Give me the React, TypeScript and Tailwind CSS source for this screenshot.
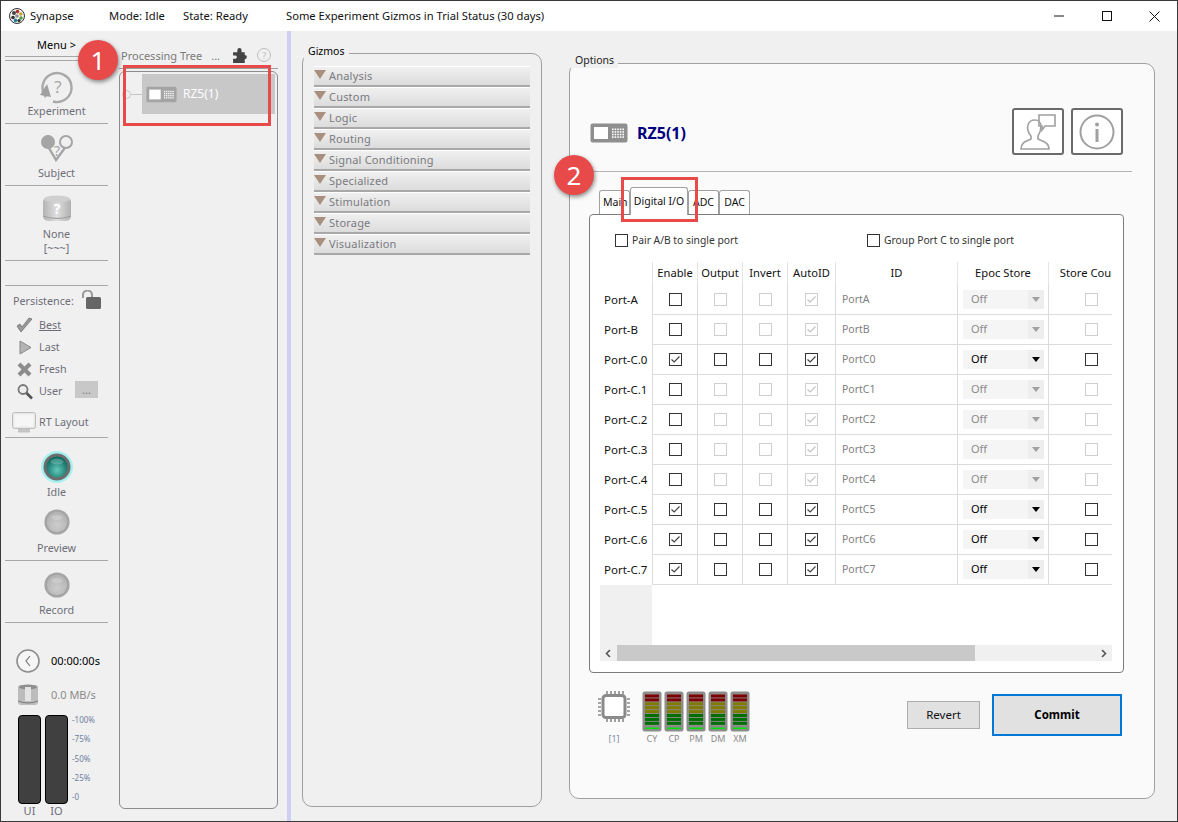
import React from "react";

const gizmos = ["Analysis", "Custom", "Logic", "Routing", "Signal Conditioning", "Specialized", "Stimulation", "Storage", "Visualization"];

const ports = [
  { name: "Port-A", id: "PortA", on: false, active: false },
  { name: "Port-B", id: "PortB", on: false, active: false },
  { name: "Port-C.0", id: "PortC0", on: true, active: true },
  { name: "Port-C.1", id: "PortC1", on: false, active: false },
  { name: "Port-C.2", id: "PortC2", on: false, active: false },
  { name: "Port-C.3", id: "PortC3", on: false, active: false },
  { name: "Port-C.4", id: "PortC4", on: false, active: false },
  { name: "Port-C.5", id: "PortC5", on: true, active: true },
  { name: "Port-C.6", id: "PortC6", on: true, active: true },
  { name: "Port-C.7", id: "PortC7", on: true, active: true },
];

const meters = ["CY", "CP", "PM", "DM", "XM"];

function Check({ checked = false, disabled = false }: { checked?: boolean; disabled?: boolean }) {
  return (
    <span className={`flex h-[13px] w-[13px] items-center justify-center border bg-white ${disabled ? "border-[#cfcfcf]" : "border-[#333333]"}`}>
      {checked && (
        <svg width="11" height="11" viewBox="0 0 11 11" fill="none">
          <path d="M1.5 5.5 L4.2 8 L9.5 2.5" stroke={disabled ? "#c4c4c4" : "#444444"} strokeWidth="1.2" />
        </svg>
      )}
    </span>
  );
}

function DeviceIcon({ w, h, fill = "#8f8f8f" }: { w: number; h: number; fill?: string }) {
  const dots = [];
  for (let r = 0; r < 4; r++) {
    for (let c = 0; c < 5; c++) {
      dots.push(<rect key={`${r}-${c}`} x={22 + c * 2.6} y={5.5 + r * 2.6} width="1.6" height="1.6" fill="#fff" />);
    }
  }
  return (
    <svg width={w} height={h} viewBox="0 0 38 20">
      <rect x="0.5" y="0.5" width="37" height="19" rx="2" fill={fill} />
      <rect x="4" y="4" width="14" height="12" fill="#fff" />
      {dots}
    </svg>
  );
}

function Orb({ size, glow = false }: { size: number; glow?: boolean }) {
  const id = glow ? "orbIdle" : `orbOff${size}`;
  return (
    <svg width={size} height={size} viewBox="0 0 32 32">
      <defs>
        <radialGradient id={id} cx="50%" cy="65%" r="60%">
          <stop offset="0%" stopColor={glow ? "#62c8b8" : "#cccccc"} />
          <stop offset="100%" stopColor={glow ? "#0a6a60" : "#b4b4b4"} />
        </radialGradient>
      </defs>
      {glow && <circle cx="16" cy="16" r="16" fill="#a8f0f0" />}
      <circle cx="16" cy="16" r={glow ? 13.5 : 15.5} fill={glow ? "#6c6c6c" : "#a4a4a4"} />
      <circle cx="16" cy="16" r={glow ? 10.5 : 12.5} fill={`url(#${id})`} />
      <ellipse cx="16" cy="10.5" rx="6.5" ry="3" fill="#fff" opacity="0.2" />
    </svg>
  );
}

function Meter() {
  const segs = ["#7c0000", "#7c0000", "#807a00", "#807a00", "#807a00", "#006e00", "#006e00", "#006e00"];
  return (
    <svg width="20" height="41" viewBox="0 0 20 41">
      <rect x="0.5" y="0.5" width="19" height="40" rx="2.5" fill="#8c8c8c" />
      {segs.map((c, i) => (
        <rect key={i} x="3" y={3.5 + i * 3.9} width="14" height="3" fill={c} />
      ))}
      <rect x="3" y="36.5" width="14" height="1.6" fill="#00e000" />
    </svg>
  );
}

function NavLabel({ children }: { children: React.ReactNode }) {
  return <div className="text-center text-[10.75px] leading-[14px] text-[#6e6e78]">{children}</div>;
}

function PersistRow({ label, icon, underline = false }: { label: string; icon: React.ReactNode; underline?: boolean }) {
  return (
    <div className="flex h-[22px] items-center pl-[11px]">
      <svg width="17" height="17" viewBox="0 0 17 17">{icon}</svg>
      <span className={`ml-[6px] text-[10.75px] text-[#6e6e78] ${underline ? "underline" : ""}`}>{label}</span>
    </div>
  );
}

function Sidebar() {
  return (
    <div className="ml-1 w-[103px] shrink-0">
      <div className="h-[25px] pt-[7px] text-center text-[11px] leading-[14px] text-black">Menu &gt;</div>
      <div className="h-[5px] border-y border-[#a8a8a8]" />

      <div className="flex h-[63px] flex-col items-center border-b border-[#a8a8a8] pt-[10px]">
        <svg width="34" height="33" viewBox="0 0 34 33" fill="none">
          <path d="M6 26 A14.5 14.5 0 1 1 13 30.5" stroke="#a9a9a9" strokeWidth="2.4" />
          <path d="M0 24 L7 13 L11 26 Z" fill="#a0a0a0" />
          <text x="18" y="22" fontSize="17" textAnchor="middle" fill="#a9a9a9" fontFamily="Noto Sans">?</text>
        </svg>
        <NavLabel>Experiment</NavLabel>
      </div>

      <div className="flex h-[62px] flex-col items-center border-b border-[#a8a8a8] pt-[11px]">
        <svg width="33" height="27" viewBox="0 0 33 27" fill="none">
          <path d="M6 8 L16 25 L27 10" stroke="#a5a5a5" strokeWidth="2.4" />
          <circle cx="8" cy="7" r="7" fill="#a5a5a5" />
          <circle cx="26" cy="7" r="6" stroke="#a5a5a5" strokeWidth="2" fill="#f0f0f0" />
          <text x="17" y="21" fontSize="14" textAnchor="middle" fill="#a5a5a5" fontFamily="Noto Sans">?</text>
        </svg>
        <div className="mt-1"><NavLabel>Subject</NavLabel></div>
      </div>

      <div className="flex h-[75px] flex-col items-center border-b border-[#a8a8a8] pt-[9px]">
        <svg width="28" height="28" viewBox="0 0 28 28">
          <defs>
            <linearGradient id="cyl" x1="0" x2="1" y1="0" y2="0">
              <stop offset="0%" stopColor="#b4b4b4" />
              <stop offset="50%" stopColor="#dedede" />
              <stop offset="100%" stopColor="#b0b0b0" />
            </linearGradient>
          </defs>
          <rect x="0" y="2" width="28" height="24" rx="5" fill="url(#cyl)" />
          <ellipse cx="14" cy="4" rx="13" ry="3.5" fill="#cfcfcf" />
          <path d="M0 21 Q14 26 28 21" stroke="#9c9c9c" fill="none" />
          <text x="14" y="19" fontSize="14" fontWeight="bold" textAnchor="middle" fill="#fff" fontFamily="Noto Sans">?</text>
        </svg>
        <div className="mt-1"><NavLabel>None</NavLabel></div>
        <NavLabel>[~~~]</NavLabel>
      </div>

      <div className="h-[25px] border-b border-[#a8a8a8]" />

      <div className="flex h-[28px] items-center pl-[8px] pt-[2px] text-[10.75px] text-[#6e6e78]">
        <span>Persistence:</span>
        <svg className="ml-[7px] -mt-[4px]" width="20" height="19" viewBox="0 0 20 19" fill="none">
          <path d="M2 8 V5 A4.5 4.5 0 0 1 11 5 V9" stroke="#999" strokeWidth="2" />
          <rect x="5" y="7" width="15" height="12" rx="1.5" fill="#666" />
        </svg>
      </div>

      <PersistRow label="Best" underline icon={<path d="M1 9 L5 15 L16 2 L13 1 L6 10 L4 7 Z" fill="#9a9a9a" stroke="#666" strokeWidth="0.7" />} />
      <PersistRow label="Last" icon={<path d="M4 2 L15 8.5 L4 15 Z" fill="#b4b4b4" stroke="#888" />} />
      <PersistRow label="Fresh" icon={<path d="M3 3 L14 14 M14 3 L3 14" stroke="#8c8c8c" strokeWidth="4.2" />} />
      <div className="relative">
        <PersistRow label="User" icon={<g fill="none"><circle cx="7" cy="6.5" r="4.5" stroke="#777" strokeWidth="1.8" fill="#eee" /><path d="M10.5 10 L16 15.5" stroke="#555" strokeWidth="2.6" /></g>} />
        <span className="absolute left-[70px] top-[1px] flex h-[17px] w-[23px] items-center justify-center bg-[#c8c8c8] text-[11px] leading-none text-[#777]">...</span>
      </div>

      <div className="flex h-[36px] items-center border-b border-[#a8a8a8] pl-[7px] pt-[5px]">
        <svg width="24" height="21" viewBox="0 0 24 21">
          <rect x="0.5" y="0.5" width="23" height="16" rx="2" fill="#e8e8e8" stroke="#bdbdbd" />
          <rect x="2.5" y="2.5" width="19" height="12" fill="#f6f6f6" />
          <rect x="6" y="17" width="12" height="3.5" fill="#c4c4c4" />
        </svg>
        <span className="ml-[3px] text-[10.75px] text-[#6e6e78]">RT Layout</span>
      </div>

      <div className="flex h-[123px] flex-col items-center border-b border-[#a8a8a8] pt-[13px]">
        <Orb size={32} glow />
        <div className="mt-[2px]"><NavLabel>Idle</NavLabel></div>
        <div className="mt-[10px]"><Orb size={26} /></div>
        <div className="mt-[6px]"><NavLabel>Preview</NavLabel></div>
      </div>

      <div className="flex h-[62px] flex-col items-center border-b border-[#a8a8a8] pt-[11px]">
        <Orb size={26} />
        <div className="mt-[5px]"><NavLabel>Record</NavLabel></div>
      </div>

      <div className="flex items-center pl-[11px] pt-[26px]">
        <svg width="24" height="24" viewBox="0 0 24 24" fill="none">
          <circle cx="12" cy="12" r="11" fill="#f6f6f6" stroke="#8e8e8e" strokeWidth="1.6" />
          <path d="M14 7 L10 12 L14 17" stroke="#777" strokeWidth="1.2" />
        </svg>
        <span className="ml-[11px] text-[11px] text-black">00:00:00s</span>
      </div>

      <div className="mt-[11px] flex h-[22px] items-center pl-[13px]">
        <svg width="20" height="22" viewBox="0 0 20 22">
          <rect x="0" y="1" width="20" height="20" rx="3" fill="#bcbcbc" />
          <ellipse cx="10" cy="3" rx="9" ry="2.6" fill="#8e8e8e" />
          <rect x="7" y="3" width="6" height="14" fill="#e4e4e4" />
          <path d="M0 17 Q10 21 20 17" stroke="#7c7c7c" fill="none" />
        </svg>
        <span className="ml-[13px] text-[11px] text-[#8a8a8a]">0.0 MB/s</span>
      </div>

      <div className="mt-[9px] flex pl-[13px]">
        <div className="h-[89px] w-[23px] rounded-[4px] border border-black bg-[#404040]" />
        <div className="ml-[4px] h-[89px] w-[23px] rounded-[4px] border border-black bg-[#404040]" />
        <div className="ml-[4px] flex h-[87px] flex-col justify-between text-[8px] leading-[10px] text-[#6f7f9f]">
          <span>-100%</span>
          <span>-75%</span>
          <span>-50%</span>
          <span>-25%</span>
          <span>-0</span>
        </div>
      </div>
      <div className="flex pl-[13px] text-[11px] leading-[14px] text-[#6e6e78]">
        <span className="w-[23px] text-center">UI</span>
        <span className="ml-[4px] w-[23px] text-center">IO</span>
      </div>
    </div>
  );
}

function TreePanel() {
  return (
    <div className="ml-[11px] w-[159px] shrink-0">
      <div className="flex h-[38px] items-center border-b border-[#a0a0a0] pl-[2px] pt-[13px] text-[11px] text-[#7a7a7a]">
        <span>Processing Tree</span>
        <span className="ml-[9px]">...</span>
        <svg className="ml-[12px] -mt-[2px]" width="17" height="17" viewBox="0 0 16 16">
          <path d="M1 5 H5 V3 A2 2 0 0 1 9 3 V5 H12 V7.5 A2 2 0 0 1 12 11.5 V15 H1 V11 H3.5 A1.6 1.6 0 0 0 3.5 8 H1 Z" fill="#444444" />
        </svg>
        <span className="ml-[8px] -mt-[2px] flex h-[14px] w-[14px] items-center justify-center rounded-full border border-[#bdbdbd] text-[9px] leading-none text-[#bdbdbd]">?</span>
      </div>
      <div className="mt-[2px] h-[738px] rounded-[6px] border border-[#8c8c8c] pt-[2px]">
        <div className="flex items-center pl-[2px] pr-[2px]">
          <span className="h-[9px] w-[9px] rounded-full border border-[#c4c4c4]" />
          <span className="h-px w-[11px] bg-[#c4c4c4]" />
          <div className="flex h-[40px] flex-1 items-center bg-[#c8c8c8] pl-[4px]">
            <DeviceIcon w={31} h={17} fill="#a4a4a4" />
            <span className="ml-[6px] text-[12px] text-white">RZ5(1)</span>
          </div>
        </div>
      </div>
    </div>
  );
}

function GizmosPanel() {
  return (
    <div className="relative ml-[11px] mt-[22px] h-[754px] w-[240px] shrink-0 rounded-[10px] border border-[#a0a0a0] px-[11px] pt-[12px]">
      <span className="absolute -top-[10px] left-[1px] bg-[#f0f0f0] px-1 text-[10.5px] leading-[15px] text-black">Gizmos</span>
      {gizmos.map((g) => (
        <div key={g} className="flex h-[21px] items-center border-b-2 border-t border-b-[#a8a8a8] border-t-white bg-gradient-to-b from-[#f0f0f0] to-[#dcdcdc]">
          <svg className="-mt-[3px]" width="12" height="9" viewBox="0 0 12 9">
            <path d="M0 0 H12 L6 9 Z" fill="#a88f80" />
          </svg>
          <span className="ml-[3px] text-[11px] tracking-[0.2px] text-[#7a7a80]">{g}</span>
        </div>
      ))}
    </div>
  );
}

function PortRow({ name, id, on, active }: { name: string; id: string; on: boolean; active: boolean }) {
  const cell = "flex items-center justify-center border-b border-r border-[#dcdcdc]";
  return (
    <div className="grid h-[30px] w-[534px] grid-cols-[53px_45px_45px_45px_48px_122px_91px_85px]">
      <div className="flex items-center border-r border-[#dcdcdc] pl-[4px] text-[11.5px] text-[#111111]">{name}</div>
      <div className={cell}><Check checked={on} /></div>
      <div className={cell}><Check disabled={!active} /></div>
      <div className={cell}><Check disabled={!active} /></div>
      <div className={cell}><Check checked disabled={!active} /></div>
      <div className="flex items-center border-b border-r border-[#dcdcdc] pl-[6px] pt-px text-[10.5px] text-[#808080]">{id}</div>
      <div className="flex items-center border-b border-r border-[#dcdcdc] pl-[5px]">
        <div className={`flex h-[19px] w-[81px] items-center bg-[#f5f5f5] text-[11px] ${active ? "text-black" : "text-[#8a8a8a]"}`}>
          <span className="flex-1 pl-[8px]">Off</span>
          <span className="flex h-full w-[16px] items-center justify-center bg-[#eeeeee]">
            <svg width="8" height="5" viewBox="0 0 8 5"><path d="M0 0 H8 L4 5 Z" fill={active ? "#000000" : "#a0a0a0"} /></svg>
          </span>
        </div>
      </div>
      <div className={cell}><Check disabled={!active} /></div>
    </div>
  );
}

function PortTable() {
  const head = "flex items-center justify-center border-r border-[#e4e4e4] text-[11.2px] text-[#111111] whitespace-nowrap";
  return (
    <div className="mx-[10px] w-[512px] overflow-hidden">
      <div className="grid h-[23px] w-[534px] grid-cols-[53px_45px_45px_45px_48px_122px_91px_85px]">
        <div className={head} />
        <div className={head}>Enable</div>
        <div className={head}>Output</div>
        <div className={head}>Invert</div>
        <div className={head}>AutoID</div>
        <div className={head}>ID</div>
        <div className={head}>Epoc Store</div>
        <div className={head}>Store Count</div>
      </div>
      {ports.map((p) => (
        <PortRow key={p.name} {...p} />
      ))}
      <div className="h-[60px] w-[52px] bg-[#f0f0f0]" />
      <div className="flex h-[16px] items-center bg-[#f0f0f0]">
        <svg className="ml-[4px]" width="9" height="9" viewBox="0 0 9 9" fill="none"><path d="M6 1 L2.5 4.5 L6 8" stroke="#555" strokeWidth="1.6" /></svg>
        <div className="ml-[4px] h-full w-[358px] bg-[#c9c9c9]" />
        <svg className="ml-auto mr-[4px]" width="9" height="9" viewBox="0 0 9 9" fill="none"><path d="M3 1 L6.5 4.5 L3 8" stroke="#555" strokeWidth="1.6" /></svg>
      </div>
    </div>
  );
}

function OptionsPanel() {
  return (
    <div className="relative ml-[27px] mt-[32px] h-[736px] w-[586px] shrink-0 rounded-[10px] border border-[#a0a0a0] bg-[#fafafa] pt-[44px]">
      <span className="absolute -top-[11px] left-[1px] bg-[#f0f0f0] px-1 text-[10.5px] leading-[15px] text-[#222222]">Options</span>

      <div className="mr-[31px] flex h-[47px] items-center pl-[20px]">
        <div className="flex items-center pt-[2px]">
          <DeviceIcon w={38} h={20} />
          <span className="ml-[9px] text-[16px] font-bold text-[#000080]">RZ5(1)</span>
        </div>
        <div className="ml-auto flex gap-[7px]">
          <div className="flex h-[47px] w-[52px] items-center justify-center rounded-[3px] border-2 border-[#6a6a6a] bg-white">
            <svg width="40" height="38" viewBox="0 0 40 38" fill="none" stroke="#a0a0a0" strokeWidth="1.6">
              <path d="M3 36 C3 29 9 28 13 26 V23 C10 20 9 15 10 12 C11 8 14 7 17 7 C20 7 23 9 23 13 C23 17 22 20 20 23 V26 C24 28 31 29 31 36 Z" />
              <path d="M21 2 H37 V13 H27 L24 17 V13 H21 Z" />
            </svg>
          </div>
          <div className="flex h-[47px] w-[52px] items-center justify-center rounded-[3px] border-2 border-[#6a6a6a] bg-white">
            <svg width="38" height="38" viewBox="0 0 38 38" fill="none">
              <circle cx="19" cy="19" r="16.5" stroke="#a0a0a0" strokeWidth="2" />
              <circle cx="19" cy="11.5" r="2" fill="#a0a0a0" />
              <rect x="17.5" y="16" width="3" height="13" fill="#a0a0a0" />
            </svg>
          </div>
        </div>
      </div>

      <div className="ml-[20px] mr-[22px] mt-[16px] border-b border-[#b4b4b4]" />

      <div className="ml-[29px] flex h-[42px] items-end text-[10.5px] text-[#111111]">
        <div className="flex h-[24px] w-[31px] items-center rounded-t-[3px] border border-b-0 border-[#a0a0a0] bg-white pl-[3px] pt-px">Main</div>
        <div className="relative -mb-px flex h-[28px] w-[58px] items-center justify-center rounded-t-[3px] border border-b-0 border-[#a0a0a0] bg-white pt-px">Digital I/O</div>
        <div className="flex h-[24px] w-[31px] items-center justify-center rounded-t-[3px] border border-b-0 border-[#a0a0a0] bg-white pt-px">ADC</div>
        <div className="flex h-[24px] w-[31px] items-center justify-center rounded-t-[3px] border border-b-0 border-[#a0a0a0] bg-white pt-px">DAC</div>
      </div>

      <div className="ml-[19px] w-[535px] rounded-[4px] border border-[#7c7c7c] bg-white pb-[11px]">
        <div className="flex h-[47px] items-center pl-[25px] pt-[4px] text-[10.3px] text-[#333333]">
          <Check />
          <span className="ml-[4px] w-[235px]">Pair A/B to single port</span>
          <Check />
          <span className="ml-[4px]">Group Port C to single port</span>
        </div>
        <PortTable />
      </div>

      <div className="flex pl-[28px] pr-[32px] pt-[18px]">
        <div className="flex w-[32px] flex-col items-center">
          <svg width="32" height="31" viewBox="0 0 32 31" fill="none">
            <rect x="5" y="4.5" width="22" height="22" rx="3" fill="#ffffff" stroke="#8a8a8a" strokeWidth="3" />
            <path d="M9 0 V3 M13 0 V3 M17 0 V3 M21 0 V3 M25 0 V3 M9 28 V31 M13 28 V31 M17 28 V31 M21 28 V31 M25 28 V31 M0 8 H3 M0 12 H3 M0 16 H3 M0 20 H3 M0 24 H3 M29 8 H32 M29 12 H32 M29 16 H32 M29 20 H32 M29 24 H32" stroke="#8a8a8a" strokeWidth="1.6" />
          </svg>
          <span className="mt-[10px] text-[9px] leading-[14px] text-[#7c8ea8]">[1]</span>
        </div>
        <div className="ml-[12px] flex gap-[2px]">
          {meters.map((m) => (
            <div key={m} className="flex w-[20px] flex-col items-center">
              <Meter />
              <span className="text-[9px] leading-[14px] text-[#8a8a8a]">{m}</span>
            </div>
          ))}
        </div>
        <div className="ml-auto mt-[3px] flex h-[42px] items-center gap-[12px]">
          <button className="h-[28px] w-[73px] border border-[#adadad] bg-[#e1e1e1] text-[11.5px] text-[#111111]">Revert</button>
          <button className="h-[42px] w-[130px] border-2 border-[#0078d7] bg-[#e1e1e1] text-[11.5px] font-bold text-black">Commit</button>
        </div>
      </div>
    </div>
  );
}

export default function App() {
  return (
    <div className="relative flex h-[822px] w-[1178px] flex-col overflow-hidden border border-[#3a3a3a] bg-[#f0f0f0] font-['Noto_Sans',sans-serif]">
      {/* title bar */}
      <div className="flex h-[30px] shrink-0 items-center bg-white text-[11.2px] text-[#111111]">
        <svg className="ml-[8px]" width="16" height="16" viewBox="0 0 16 16">
          <circle cx="8" cy="8" r="7.5" fill="#f4f4f4" stroke="#333333" />
          <circle cx="5" cy="5" r="2" fill="#444444" />
          <circle cx="8.5" cy="3.6" r="1.8" fill="#b03030" />
          <circle cx="11.8" cy="6" r="1.8" fill="#c8a030" />
          <circle cx="4" cy="9.5" r="1.8" fill="#303030" />
          <circle cx="8" cy="8" r="1.8" fill="#909090" />
          <circle cx="12" cy="10" r="1.8" fill="#50a040" />
          <circle cx="6.5" cy="12.4" r="1.8" fill="#2080a0" />
          <circle cx="10" cy="12.6" r="1.6" fill="#303030" />
        </svg>
        <span className="ml-[5px] w-[79px]">Synapse</span>
        <span className="w-[74px]">Mode: Idle</span>
        <span className="w-[103px]">State: Ready</span>
        <span>Some Experiment Gizmos in Trial Status (30 days)</span>
        <div className="ml-auto flex items-center">
          <svg width="10" height="10" viewBox="0 0 10 10"><path d="M0 5 H10" stroke="#111" /></svg>
          <svg className="ml-[38px]" width="10" height="10" viewBox="0 0 10 10" fill="none"><rect x="0.5" y="0.5" width="9" height="9" stroke="#111" /></svg>
          <svg className="ml-[37px] mr-[17px]" width="11" height="11" viewBox="0 0 11 11"><path d="M0.5 0.5 L10.5 10.5 M10.5 0.5 L0.5 10.5" stroke="#111" /></svg>
        </div>
      </div>

      <div className="flex flex-1">
        <Sidebar />
        <TreePanel />
        <div className="ml-[9px] w-[4px] shrink-0 bg-[#cfcff5]" />
        <GizmosPanel />
        <OptionsPanel />
      </div>

      {/* tutorial annotations */}
      <div className="absolute left-[122px] top-[64px] h-[61px] w-[148px] border-[3px] border-[#e84a4a]" />
      <div className="absolute left-[620px] top-[176px] h-[45px] w-[77px] border-[3px] border-[#e84a4a]" />
      <div className="absolute left-[77px] top-[39px] flex h-[40px] w-[40px] items-center justify-center rounded-full bg-[#e84a4a] text-[26px] text-white shadow-[1px_2px_4px_rgba(0,0,0,0.45)]">1</div>
      <div className="absolute left-[553px] top-[154px] flex h-[40px] w-[40px] items-center justify-center rounded-full bg-[#e84a4a] text-[26px] text-white shadow-[1px_2px_4px_rgba(0,0,0,0.45)]">2</div>
    </div>
  );
}
